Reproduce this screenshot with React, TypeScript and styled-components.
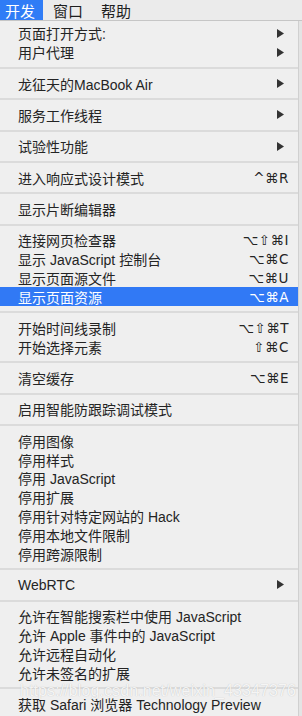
import React from "react";
import styled, { createGlobalStyle } from "styled-components";

const Global = createGlobalStyle`
  html, body { margin: 0; padding: 0; background: #e4e4e4; }
  body { font-family: "Liberation Sans", "Noto Sans CJK SC", "DejaVu Sans", sans-serif; }
`;

const Page = styled.div`
  width: 302px;
  height: 716px;
  display: flex;
  flex-direction: column;
  overflow: hidden;
  background: #e4e4e4;
`;

const MenuBar = styled.div`
  display: flex;
  align-items: stretch;
  height: 20px;
  background: #ebebeb;
  border-bottom: 1px solid #c6c6c6;
  flex-shrink: 0;
`;

const MenuTitle = styled.div<{ $active?: boolean }>`
  display: flex;
  align-items: center;
  padding: 0 8px 0 10px;
  font-size: 15px;
  color: ${(p) => (p.$active ? "#ffffff" : "#1e1e1e")};
  background: ${(p) => (p.$active ? "#2f7cf6" : "transparent")};
  &:first-child { padding-left: 5px; }
`;

const Panel = styled.div`
  position: relative;
  width: 299px;
  flex: 1;
  display: flex;
  flex-direction: column;
  padding-top: 3px;
  background: #efefef;
  border-right: 1px solid #d0d0d0;
  box-sizing: border-box;
`;

const Item = styled.div<{ $hi?: boolean }>`
  height: 18.8px;
  flex-shrink: 0;
  display: flex;
  align-items: center;
  justify-content: space-between;
  padding: 0 9px 0 18px;
  font-size: 14px;
  color: ${(p) => (p.$hi ? "#ffffff" : "#242424")};
  background: ${(p) => (p.$hi ? "#3179f5" : "transparent")};
  white-space: nowrap;
`;

const Shortcut = styled.span`
  font-family: "DejaVu Sans", "Liberation Sans", sans-serif;
  font-size: 13.5px;
  letter-spacing: 0.5px;
`;

const ArrowIcon = styled.svg`
  width: 7px;
  height: 9px;
  margin-right: 5px;
  fill: #333333;
`;

const Separator = styled.div`
  height: 12.55px;
  flex-shrink: 0;
  display: flex;
  align-items: center;
  &::after {
    content: "";
    flex: 1;
    height: 2px;
    background: #dbdbdb;
  }
`;

const Watermark = styled.div`
  position: absolute;
  left: 20px;
  top: 662px;
  font-family: "Liberation Sans", sans-serif;
  font-size: 16px;
  line-height: 15px;
  color: rgba(255, 255, 255, 0.85);
  text-shadow: 0 0 1px rgba(120, 120, 120, 0.45);
  letter-spacing: 0.1px;
  pointer-events: none;
  white-space: nowrap;
`;

type Entry =
  | { sep: true }
  | { label: string; shortcut?: string; sub?: boolean; hi?: boolean };

const entries: Entry[] = [
  { label: "页面打开方式:", sub: true },
  { label: "用户代理", sub: true },
  { sep: true },
  { label: "龙征天的MacBook Air", sub: true },
  { sep: true },
  { label: "服务工作线程", sub: true },
  { sep: true },
  { label: "试验性功能", sub: true },
  { sep: true },
  { label: "进入响应式设计模式", shortcut: "^⌘R" },
  { sep: true },
  { label: "显示片断编辑器" },
  { sep: true },
  { label: "连接网页检查器", shortcut: "⌥⇧⌘I" },
  { label: "显示 JavaScript 控制台", shortcut: "⌥⌘C" },
  { label: "显示页面源文件", shortcut: "⌥⌘U" },
  { label: "显示页面资源", shortcut: "⌥⌘A", hi: true },
  { sep: true },
  { label: "开始时间线录制", shortcut: "⌥⇧⌘T" },
  { label: "开始选择元素", shortcut: "⇧⌘C" },
  { sep: true },
  { label: "清空缓存", shortcut: "⌥⌘E" },
  { sep: true },
  { label: "启用智能防跟踪调试模式" },
  { sep: true },
  { label: "停用图像" },
  { label: "停用样式" },
  { label: "停用 JavaScript" },
  { label: "停用扩展" },
  { label: "停用针对特定网站的 Hack" },
  { label: "停用本地文件限制" },
  { label: "停用跨源限制" },
  { sep: true },
  { label: "WebRTC", sub: true },
  { sep: true },
  { label: "允许在智能搜索栏中使用 JavaScript" },
  { label: "允许 Apple 事件中的 JavaScript" },
  { label: "允许远程自动化" },
  { label: "允许未签名的扩展" },
  { sep: true },
  { label: "获取 Safari 浏览器 Technology Preview" },
];

const Arrow = () => (
  <ArrowIcon viewBox="0 0 7 9">
    <polygon points="0,0 7,4.5 0,9" />
  </ArrowIcon>
);

export default function App() {
  return (
    <>
      <Global />
      <Page>
        <MenuBar>
          <MenuTitle $active>开发</MenuTitle>
          <MenuTitle>窗口</MenuTitle>
          <MenuTitle>帮助</MenuTitle>
        </MenuBar>
        <Panel>
          {entries.map((e, i) =>
            "sep" in e ? (
              <Separator key={i} />
            ) : (
              <Item key={i} $hi={e.hi}>
                <span>{e.label}</span>
                {e.sub ? <Arrow /> : e.shortcut ? <Shortcut>{e.shortcut}</Shortcut> : null}
              </Item>
            )
          )}
          <Watermark>https://blog.csdn.net/weixin_43347376</Watermark>
        </Panel>
      </Page>
    </>
  );
}
